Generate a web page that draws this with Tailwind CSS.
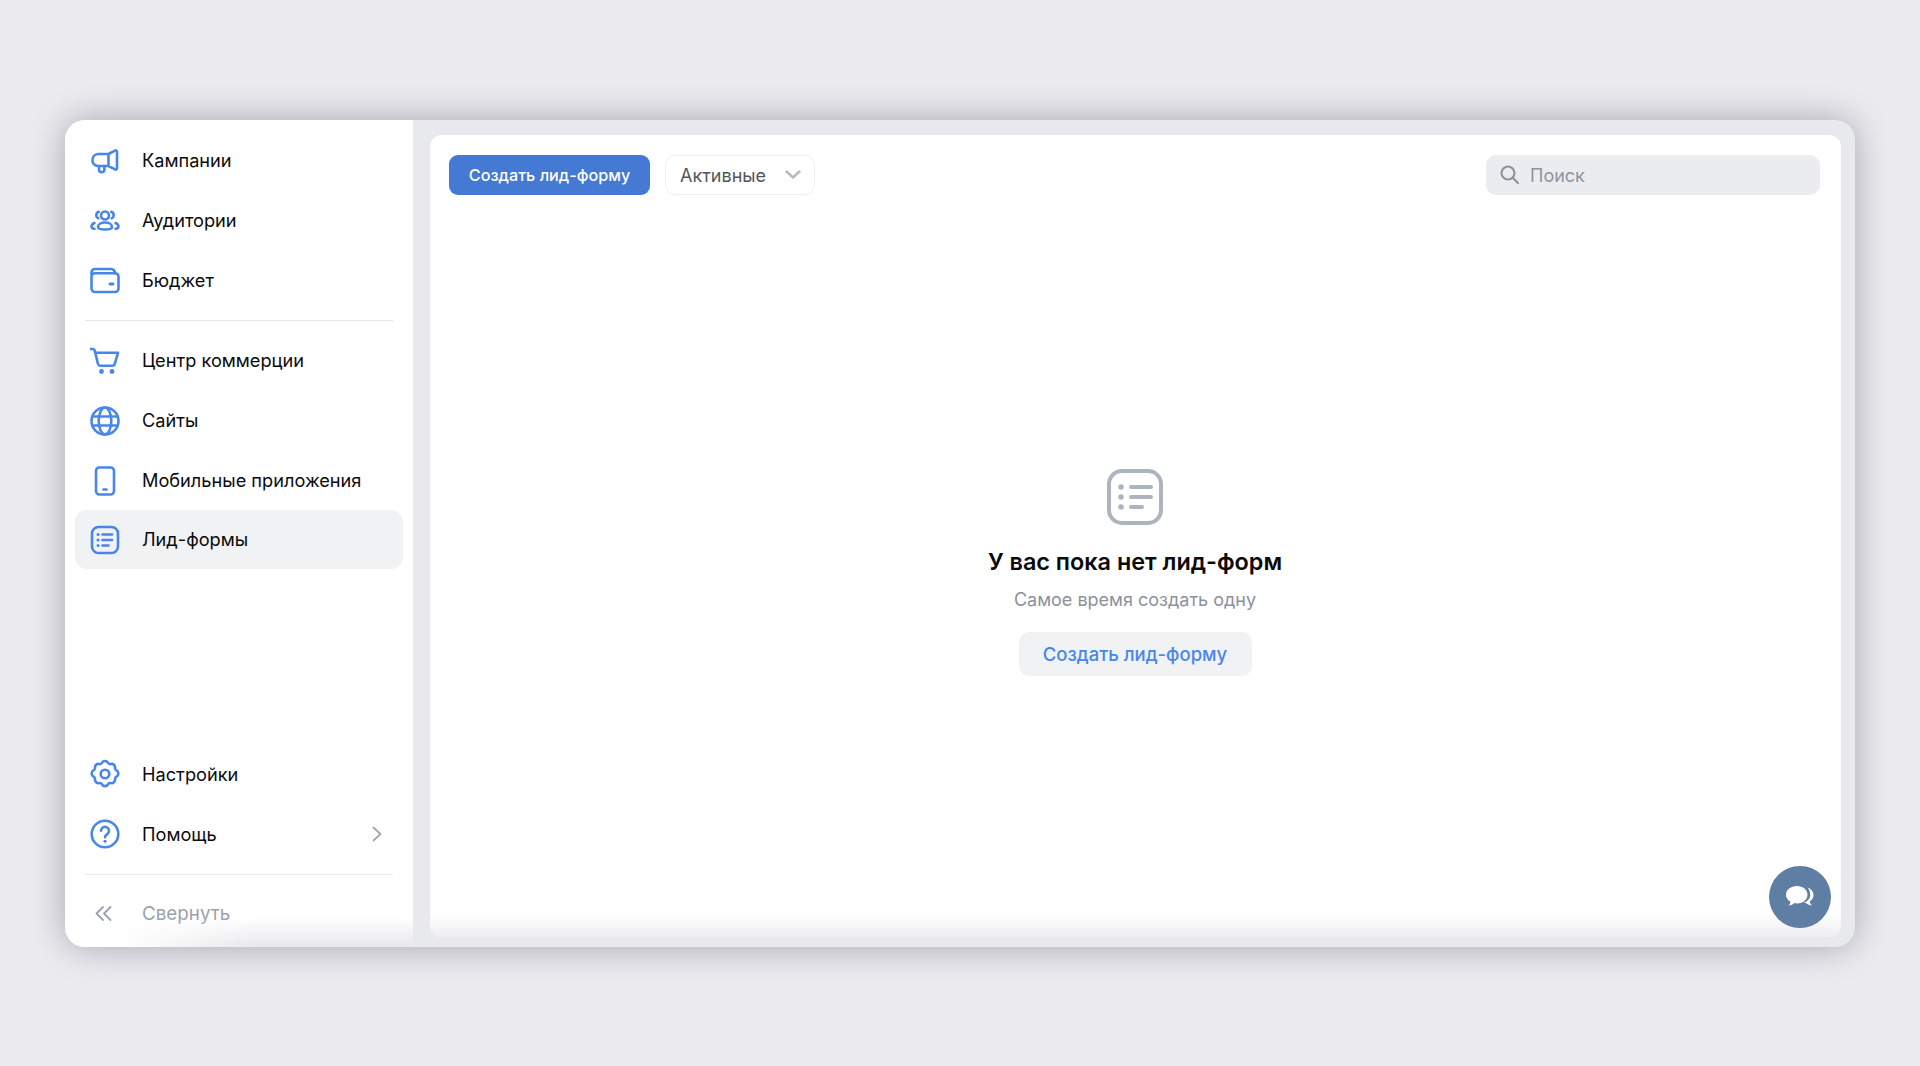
<!doctype html>
<html lang="ru"><head><meta charset="utf-8"><script src="https://cdn.jsdelivr.net/npm/@tailwindcss/browser@4"></script></head>
<body class="bg-[#ebebf0] font-['Inter','Liberation_Sans',sans-serif] overflow-hidden">
<div class="w-[1920px] h-[1066px] pt-[120px] pl-[65px]">
<div class="relative w-[1790px] h-[827px] rounded-[20px] overflow-hidden flex bg-[#e8e9ed] shadow-[0_0_36px_rgba(0,0,20,0.30)]">
 <aside class="relative w-[348px] bg-white flex flex-col pt-[11px] pb-[3px] text-[18.2px] text-[#0b0b0d]">
  <nav class="px-[10px]">
   <a class="flex items-center h-[60px] pl-[15px] gap-[22px]"><svg class="w-[30px] h-[30px]" viewBox="0 0 30 30" fill="none" stroke="#4986ea" stroke-width="2.600" stroke-linejoin="round" stroke-linecap="round"><path d="M11 8h7.500L25 4.600c1-.5 2 .1 2 1.200v16.400c0 1.100-1 1.700-2 1.200L18.500 20H8a5.500 5.500 0 0 1-5.500-6v0A6 6 0 0 1 8 8h3M18.500 8v12"/><path d="M9 20v3.500a2.700 2.700 0 0 0 5.400 0V20"/></svg><span>Кампании</span></a>
   <a class="flex items-center h-[60px] pl-[15px] gap-[22px]"><svg class="w-[30px] h-[30px]" viewBox="0 0 30 30" fill="none" stroke="#4986ea" stroke-width="2.600" stroke-linecap="round" stroke-linejoin="round"><circle cx="15" cy="9.500" r="4"/><path d="M8 21c0-3 3.500-4.500 7-4.500s7 1.500 7 4.500c0 2-2 2.500-7 2.500S8 23 8 21Z"/><path d="M8.800 5.800a3.500 3.500 0 0 0-.5 6.500M21.200 5.800a3.500 3.500 0 0 1 .5 6.500M4.500 17c-2 .8-3 2.200-3 3.500 0 1 .8 2 3 2.300M25.500 17c2 .8 3 2.200 3 3.500 0 1-.8 2-3 2.300"/></svg><span>Аудитории</span></a>
   <a class="flex items-center h-[60px] pl-[15px] gap-[22px]"><svg class="w-[30px] h-[30px]" viewBox="0 0 30 30" fill="none" stroke="#4986ea" stroke-width="2.600" stroke-linecap="round" stroke-linejoin="round"><path d="M1.500 8V6.500A3.500 3.500 0 0 1 5 3h16a4 4 0 0 1 4 4.200"/><rect x="1.500" y="7.200" width="27" height="18.800" rx="3.500"/><path d="M20 18h3" stroke-width="2.800"/></svg><span>Бюджет</span></a>
  </nav>
  <div class="h-px bg-[#e6e7eb] mx-[20px] mt-[9px] mb-[10px]"></div>
  <nav class="px-[10px]">
   <a class="flex items-center h-[60px] pl-[15px] gap-[22px]"><svg class="w-[30px] h-[30px]" viewBox="0 0 30 30" fill="none" stroke="#4986ea" stroke-width="2.600" stroke-linecap="round" stroke-linejoin="round"><path d="M0.500 3h2.300c1 0 1.800.7 2 1.600L8 18c.3 1.100 1.100 1.700 2.200 1.700h12.300c1.100 0 2-.7 2.300-1.800L28 6.800H5"/><circle cx="11.500" cy="25.500" r="1.100" fill="#4986ea" stroke="#4986ea"/><circle cx="22" cy="25.500" r="1.100" fill="#4986ea" stroke="#4986ea"/></svg><span>Центр коммерции</span></a>
   <a class="flex items-center h-[60px] pl-[15px] gap-[22px]"><svg class="w-[30px] h-[30px]" viewBox="0 0 30 30" fill="none" stroke="#4986ea" stroke-width="2.600" stroke-linecap="round"><circle cx="15" cy="15" r="13.500"/><ellipse cx="15" cy="15" rx="6.300" ry="13.500"/><path d="M2.800 10.500h24.400M2.800 19.500h24.400"/></svg><span>Сайты</span></a>
   <a class="flex items-center h-[59px] pl-[15px] gap-[22px]"><svg class="w-[30px] h-[30px]" viewBox="0 0 30 30" fill="none" stroke="#4986ea" stroke-width="2.600" stroke-linecap="round"><rect x="6" y="1.500" width="18" height="27" rx="3.500"/><path d="M13.500 23.500h3"/></svg><span>Мобильные приложения</span></a>
   <a class="flex items-center h-[59px] pl-[15px] gap-[22px] bg-[#f1f2f4] rounded-[12px]"><svg class="w-[30px] h-[30px]" viewBox="0 0 30 30" fill="none" stroke="#4986ea" stroke-width="2.600" stroke-linecap="round"><rect x="2" y="2" width="26" height="26" rx="6.500"/><path d="M12.500 9.500h9.500M12.500 15h9.500M12.500 20.500h6"/><path d="M8 9.500h.1M8 15h.1M8 20.500h.1" stroke-width="3"/></svg><span>Лид-формы</span></a>
  </nav>
  <div class="flex-1"></div>
  <nav class="px-[10px]">
   <a class="flex items-center h-[60px] pl-[15px] gap-[22px]"><svg class="w-[30px] h-[30px] -translate-y-px" viewBox="0 0 30 30" fill="none" stroke="#4986ea" stroke-width="2.600" stroke-linejoin="round"><circle cx="15" cy="15" r="4.300"/><path d="M12.200 3.500c1-2 4.600-2 5.600 0 .6 1.200 1.900 1.800 3.200 1.500 2.200-.5 4.200 1.500 4 3.600-.1 1.300.6 2.500 1.800 3.100 2 1 2 4.700 0 5.700-1.200.6-1.900 1.800-1.800 3.100.2 2.200-1.800 4.100-4 3.600-1.300-.3-2.600.3-3.200 1.500-1 2-4.600 2-5.600 0-.6-1.200-1.900-1.800-3.200-1.500-2.200.5-4.200-1.400-4-3.600.1-1.300-.6-2.500-1.800-3.100-2-1-2-4.700 0-5.700 1.200-.6 1.900-1.800 1.800-3.100-.2-2.100 1.800-4.100 4-3.600 1.300.3 2.600-.3 3.200-1.500Z"/></svg><span>Настройки</span></a>
   <a class="flex items-center h-[60px] pl-[15px] gap-[22px]"><svg class="w-[30px] h-[30px] -translate-y-px" viewBox="0 0 30 30" fill="none" stroke="#4986ea" stroke-width="2.600" stroke-linecap="round"><circle cx="15" cy="15" r="13.300"/><path d="M11 11.800a4 4 0 1 1 6.300 3.300c-1.400 1-2.300 1.600-2.300 3.200"/><path d="M15 22.300h.1" stroke-width="3"/></svg><span class="flex-1">Помощь</span><svg class="w-[10px] h-[16px] mr-[21px] -translate-y-px" viewBox="0 0 10 16" fill="none" stroke="#a0a6b1" stroke-width="1.800" stroke-linecap="round" stroke-linejoin="round"><path d="M1.500 1.500 8.500 8l-7 6.500"/></svg></a>
  </nav>
  <div class="h-px bg-[#e6e7eb] mx-[20px] mt-[9px] mb-[9px]"></div>
  <a class="flex items-center h-[60px] pl-[30px] gap-[30px] text-[18.800px] text-[#99a2ad]"><svg class="w-[17px] h-[15px] -translate-y-px" viewBox="0 0 17 15" fill="none" stroke="#99a2ad" stroke-width="1.800" stroke-linecap="round" stroke-linejoin="round"><path d="M8 1 1.500 7.500 8 14M15.500 1 9 7.500 15.500 14"/></svg><span>Свернуть</span></a>
  <div class="absolute left-0 right-0 bottom-0 h-[30px] bg-linear-to-t from-[#e8e8ec] to-white/0 [mask-image:linear-gradient(to_right,transparent_15%,black_55%)]"></div>
 </aside>
 <main class="relative ml-[17px] mt-[15px] w-[1411px] h-[802px] bg-white rounded-[12px] overflow-hidden flex flex-col">
  <div class="flex items-center h-[40px] mt-[20px] mx-[19px] mr-[21px]">
   <button class="w-[201px] h-[40px] rounded-[9px] bg-[#4479d4] text-white text-[16.200px] font-medium">Создать лид-форму</button>
   <div class="ml-[15px] w-[150px] h-[40px] rounded-[10px] border border-[#eceef1] flex items-center pl-[14px] text-[18px] text-[#555557]"><span class="flex-1">Активные</span><svg class="w-[16px] h-[10px] mr-[13px]" viewBox="0 0 16 10" fill="none" stroke="#b6bac3" stroke-width="2.400" stroke-linecap="round" stroke-linejoin="round"><path d="m1.500 1.500 6.500 6 6.500-6"/></svg></div>
   <div class="ml-auto w-[334px] h-[40px] rounded-[10px] bg-[#ebecf0] flex items-center pl-[14px] gap-[11px] text-[18px] text-[#8b949f]"><svg class="w-[19px] h-[19px] -translate-y-px" viewBox="0 0 19 19" fill="none" stroke="#8b949f" stroke-width="2.200" stroke-linecap="round"><circle cx="8" cy="8" r="6.500"/><path d="m13 13 5 5"/></svg><span>Поиск</span></div>
  </div>
  <div class="flex flex-col items-center mt-[274px] -ml-[1px]">
   <svg class="w-[56px] h-[56px]" viewBox="0 0 56 56" fill="none" stroke="#aeb4bf" stroke-width="4" stroke-linecap="round"><rect x="2" y="2" width="52" height="52" rx="13"/><path d="M24 18h20M24 28h20M24 38h11"/><path d="M14 18h.1M14 28h.1M14 38h.1" stroke-width="5.500"/></svg>
   <h1 class="mt-[21px] text-[23.400px] leading-[32px] font-semibold text-[#0a0a0c]">У вас пока нет лид-форм</h1>
   <p class="mt-[10px] text-[18px] leading-[24px] text-[#8b929d]">Самое время создать одну</p>
   <button class="mt-[20px] w-[233px] h-[44px] pt-px rounded-[10px] bg-[#f1f2f4] text-[#4986ea] text-[18.500px] font-medium">Создать лид-форму</button>
  </div>
  <div class="absolute left-0 right-0 bottom-0 h-[24px] bg-linear-to-t from-[#eeeef1] to-white/0"></div>
  <button class="absolute right-[10px] bottom-[9px] w-[62px] h-[62px] rounded-full bg-[#5f7ea3] flex items-center justify-center"><svg class="w-[30px] h-[24px]" viewBox="0 0 30 24"><path d="M22.500 2.500c3.500 1.300 6 4 6 7.500 0 2.800-1.500 5-3.800 6.500.3 1.600 1.300 3 2.300 4-2 0-4.700-1-6-2.500-.9.100-1.600.1-2.500 0 4-1.300 6.700-4.500 6.700-8 0-3-1-5.700-2.700-7.500Z" fill="#fff"/><path d="M12 1C5.900 1 1 4.700 1 9.700c0 3 1.800 5.400 4.500 7-.2 1.500-1 3-2 3.800 2.300 0 4.700-1.100 6-2.400 1 .2 1.600.3 2.500.3 6.100 0 10.500-3.800 10.500-8.700S18.100 1 12 1Z" fill="#fff"/></svg></button>
 </main>
</div>
</div>
</body></html>
